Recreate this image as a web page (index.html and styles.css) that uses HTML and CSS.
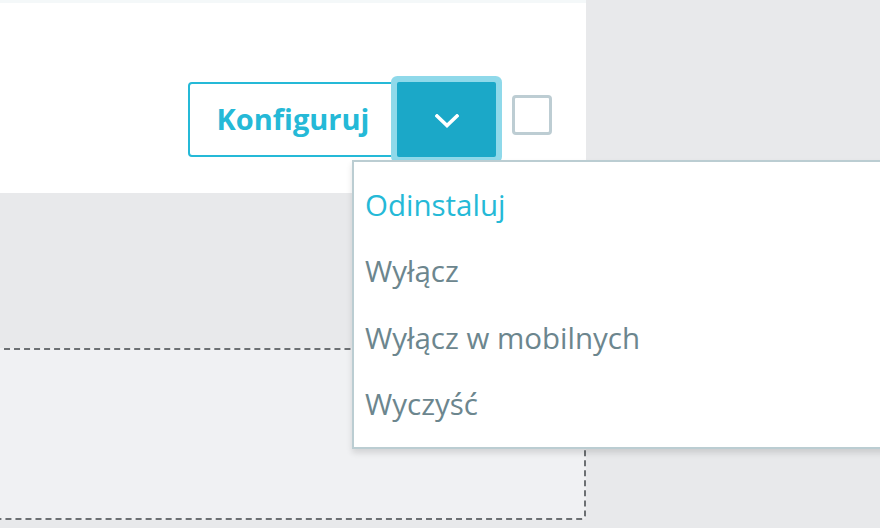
FILE: index.html
```html
<!DOCTYPE html>
<html lang="pl">
<head>
    <meta charset="UTF-8">
    <meta name="viewport" content="width=device-width, initial-scale=1.0">
    <title>Moduły</title>
    <link rel="stylesheet" href="styles.css">
</head>
<body>
<div class="page">
    <div class="column">
        <div class="module-row">
            <div class="btn-group">
                <button class="btn-configure">Konfiguruj</button>
                <button class="btn-toggle">
                    <svg width="24" height="14" viewBox="0 0 24 14">
                        <polyline points="2,2 12,11.5 22,2" fill="none" stroke="#fff" stroke-width="3.6" stroke-linecap="square" stroke-linejoin="miter"/>
                    </svg>
                </button>
                <ul class="dropdown-menu">
                    <li class="active">Odinstaluj</li>
                    <li>Wyłącz</li>
                    <li>Wyłącz w mobilnych</li>
                    <li>Wyczyść</li>
                </ul>
            </div>
            <span class="checkbox"></span>
        </div>
        <div class="drop-zone"></div>
    </div>
</div>
</body>
</html>
```

FILE: styles.css
```css
* {
    margin: 0;
    padding: 0;
    box-sizing: border-box;
}
body {
    font-family: "Open Sans", "Noto Sans", sans-serif;
    background-color: #e8e9eb;
    overflow: hidden;
}
.page {
    width: 880px;
    height: 528px;
}
.column {
    width: 586px;
    border-top: 3px solid #f4f8f9;
}
.module-row {
    height: 190px;
    background-color: #fff;
    display: flex;
    justify-content: flex-end;
    align-items: flex-start;
    padding-top: 79px;
    padding-right: 34px;
}
.btn-group {
    position: relative;
    display: flex;
}
.btn-configure {
    width: 210px;
    height: 75px;
    border: 2px solid #25b9d7;
    border-radius: 4px 0 0 4px;
    background-color: #fff;
    color: #25b9d7;
    font-family: inherit;
    font-size: 29px;
    font-weight: 700;
    padding-bottom: 2px;
}
.btn-toggle {
    width: 99px;
    height: 75px;
    margin-left: -1px;
    border: none;
    border-radius: 2px;
    background-color: #1ba8c8;
    box-shadow: 0 0 0 6px #8fd9ea;
    display: flex;
    align-items: center;
    justify-content: center;
    position: relative;
}
.btn-toggle svg {
    margin-top: 2px;
}
.checkbox {
    width: 40px;
    height: 40px;
    margin-left: 16px;
    margin-top: 13px;
    border: 3px solid #bdcdd3;
    border-radius: 4px;
    background-color: #fff;
}
.dropdown-menu {
    position: absolute;
    left: 164px;
    top: 78px;
    width: 560px;
    list-style: none;
    background-color: #fff;
    border: 2px solid #bbcdd2;
    border-right: none;
    box-shadow: 0 4px 6px rgba(0, 0, 0, 0.12);
    padding: 10px 0 10px;
    z-index: 5;
}
.dropdown-menu li {
    font-size: 29.5px;
    line-height: 42.3px;
    padding: 12px 11px;
    color: #6c868e;
    white-space: nowrap;
}
.dropdown-menu li.active {
    color: #25b9d7;
}
.drop-zone {
    margin-top: 155px;
    margin-left: -10px;
    height: 172px;
    border: 2px dashed #6c7073;
    border-radius: 4px;
    background-color: #f0f1f3;
}
```
